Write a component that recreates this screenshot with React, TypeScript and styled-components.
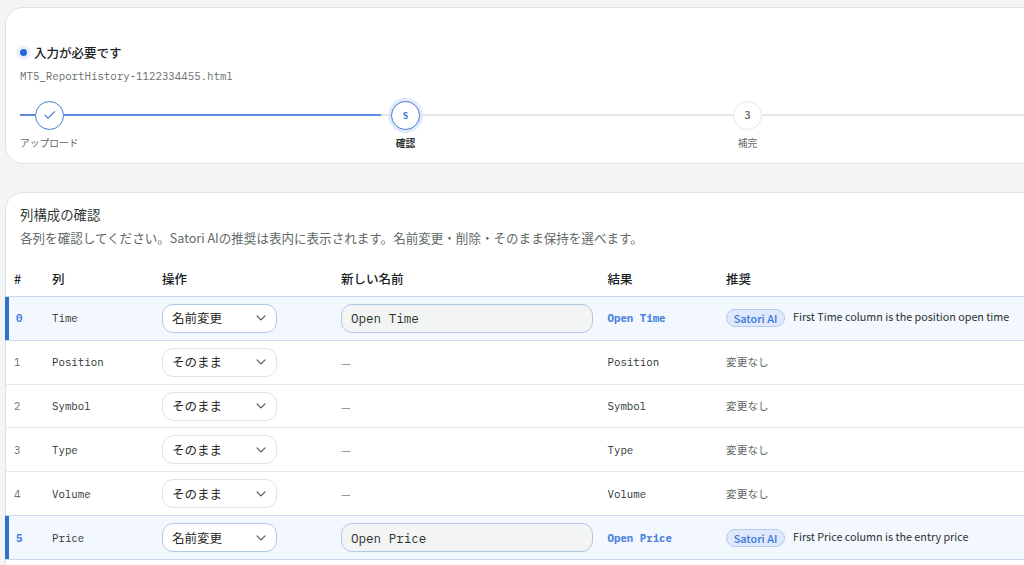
import React from "react";
import styled, { createGlobalStyle, css } from "styled-components";

const sans = `"Noto Sans CJK JP", "Noto Sans", sans-serif`;
const mono = `"IBM Plex Mono", "Liberation Mono", "Noto Sans CJK JP", monospace`;

const Global = createGlobalStyle`
  * { box-sizing: border-box; }
  html, body { margin: 0; height: 100%; overflow: hidden; }
  body { background: #f3f5f4; color: #1f2725; font-family: ${sans}; }
`;

const Page = styled.main`
  height: 565px;
  padding: 7px 0 0 5px;
  display: flex;
  flex-direction: column;
  gap: 28px;
  overflow: hidden;
`;

const Card = styled.section<{ $h: number }>`
  flex: none;
  width: 1090px;
  height: ${(p) => p.$h}px;
  background: #fff;
  border: 1px solid #dfe2e1;
  border-radius: 18px;
`;

const StatusLine = styled.div`
  display: flex;
  align-items: center;
  gap: 7px;
  margin: 35px 0 0 14px;
  height: 20px;
`;

const Dot = styled.span`
  width: 7px;
  height: 7px;
  margin-top: -1px;
  border-radius: 50%;
  background: #2268d8;
  box-shadow: 0 0 0 3.5px #e9f0fc;
`;

const StatusTitle = styled.h1`
  margin: 0;
  font-size: 12.5px;
  line-height: 20px;
  font-weight: 500;
  color: #17201d;
`;

const FileName = styled.div`
  margin: 5px 0 0 14px;
  font: 10.75px/16px ${mono};
  color: #69716e;
`;

const Stepper = styled.ol`
  list-style: none;
  margin: 16px 0 0 14px;
  padding: 0;
  display: flex;
`;

const Step = styled.li<{ $w: number }>`
  flex: none;
  width: ${(p) => p.$w}px;
`;

const Track = styled.div`
  display: flex;
  align-items: center;
  height: 30px;
`;

const Line = styled.span<{ $on?: boolean; $w?: number }>`
  flex: ${(p) => (p.$w ? "none" : 1)};
  width: ${(p) => p.$w ?? 0}px;
  height: 2px;
  background: ${(p) => (p.$on ? "#5a8bdf" : "#e6e8e7")};
`;

const Circle = styled.span<{ $state: "done" | "current" | "todo" }>`
  flex: none;
  display: flex;
  align-items: center;
  justify-content: center;
  width: 29px;
  height: 29px;
  border-radius: 50%;
  background: #fff;
  border: 1px solid ${(p) => (p.$state === "todo" ? "#e3e6e5" : "#4679d2")};
  color: ${(p) => (p.$state === "todo" ? "#5f6865" : "#3a70cf")};
  font-size: 10.7px;
  line-height: 16px;
  font-weight: 500;
  ${(p) =>
    p.$state === "current" &&
    css`
      font-size: 8.5px;
      font-weight: 700;
      box-shadow: 0 0 0 3px #e1eafb;
    `}
`;

const StepLabel = styled.div<{ $w: number; $active?: boolean }>`
  width: ${(p) => p.$w}px;
  margin-top: 6px;
  text-align: center;
  white-space: nowrap;
  font-size: 9.75px;
  line-height: 14px;
  font-weight: ${(p) => (p.$active ? 700 : 400)};
  color: ${(p) => (p.$active ? "#2a322f" : "#5f6865")};
`;

const Title = styled.h2`
  margin: 10px 0 0 14px;
  font-size: 13.4px;
  line-height: 22px;
  font-weight: 400;
  color: #333b38;
`;

const Description = styled.p`
  margin: 2px 0 0 14px;
  font-size: 12.56px;
  line-height: 21px;
  color: #606966;
`;

const Row = styled.div<{ $active?: boolean; $head?: boolean }>`
  display: grid;
  grid-template-columns: 38px 110px 179px 266.5px 118.5px 1fr;
  align-items: center;
  height: ${(p) => (p.$head ? 49 : 43.84)}px;
  margin-left: -1px;
  padding-left: 9px;
  border-bottom: 1px solid #e6e8e7;
  ${(p) =>
    p.$head &&
    css`
      padding-top: 13px;
      font-size: 12.5px;
      line-height: 20px;
      font-weight: 500;
      color: #17201d;
      border-color: #c9d7ea;
    `}
  ${(p) =>
    p.$active &&
    css`
      background: #f3f7fe;
      border-color: #c9d7ea;
      box-shadow: inset 4px 0 #2f6fce, 0 -1px #c9d7ea;
    `}
`;

const Index = styled.span<{ $active?: boolean }>`
  font: ${(p) => (p.$active ? 700 : 400)} 10.7px/16px ${mono};
  padding-left: ${(p) => (p.$active ? 2 : 0)}px;
  color: ${(p) => (p.$active ? "#4a82e0" : "#69716e")};
`;

const Code = styled.span<{ $active?: boolean }>`
  font: ${(p) => (p.$active ? 700 : 400)} 10.75px/16px ${mono};
  color: ${(p) => (p.$active ? "#4a82e0" : "#2f3735")};
`;

const Select = styled.button<{ $active?: boolean }>`
  display: flex;
  align-items: center;
  justify-content: space-between;
  width: 115px;
  height: 29px;
  padding: 0 10px 0 9px;
  background: #fff;
  border: 1px solid ${(p) => (p.$active ? "#b3c8e8" : "#e1e4e3")};
  border-radius: 11px;
  font: 12.5px/20px ${sans};
  color: #1f2725;
`;

const NameInput = styled.input`
  width: 252px;
  height: 29px;
  padding: 0 9px;
  border: 1px solid #b3c8e8;
  border-radius: 11px;
  background: #f3f5f4;
  font: 12.55px/20px ${mono};
  color: #2a322f;
  outline: none;
`;

const Dash = styled.span`
  font-size: 10.7px;
  line-height: 16px;
  padding-top: 3px;
  color: #7b8380;
`;

const Suggestion = styled.div`
  display: flex;
  align-items: center;
  gap: 8px;
  white-space: nowrap;
`;

const Badge = styled.span`
  display: flex;
  align-items: center;
  justify-content: center;
  width: 59px;
  height: 18px;
  border: 1px solid #b3cbf1;
  border-radius: 9px;
  background: #dfe9fb;
  color: #3b76dc;
  font-size: 10.9px;
  line-height: 16px;
  font-weight: 500;
`;

const Reason = styled.span`
  font-size: 10.75px;
  line-height: 16px;
  margin-top: -2px;
  color: #2a322f;
`;

const Unchanged = styled.span`
  font-size: 10.7px;
  line-height: 16px;
  color: #606966;
`;

const Chevron = () => (
  <svg width="10" height="6" viewBox="0 0 10 6" fill="none" stroke="#525b58" strokeWidth="1.2">
    <path d="M1 .9 5 4.9 9 .9" strokeLinecap="round" strokeLinejoin="round" />
  </svg>
);

const Check = () => (
  <svg width="12" height="10" viewBox="0 0 12 10" fill="none" stroke="#3a70cf" strokeWidth="1.1">
    <path d="M1 5.2 4 8.2 10.6 1.6" strokeLinecap="round" strokeLinejoin="round" />
  </svg>
);

type Column = { name: string; rename?: string; reason?: string };

const columns: Column[] = [
  { name: "Time", rename: "Open Time", reason: "First Time column is the position open time" },
  { name: "Position" },
  { name: "Symbol" },
  { name: "Type" },
  { name: "Volume" },
  { name: "Price", rename: "Open Price", reason: "First Price column is the entry price" },
];

const ColumnRow = ({ column, index }: { column: Column; index: number }) => {
  const active = Boolean(column.rename);
  return (
    <Row $active={active}>
      <Index $active={active}>{index}</Index>
      <Code>{column.name}</Code>
      <Select $active={active}>
        {active ? "名前変更" : "そのまま"}
        <Chevron />
      </Select>
      {active ? <NameInput defaultValue={column.rename} /> : <Dash>—</Dash>}
      <Code $active={active}>{column.rename ?? column.name}</Code>
      {active ? (
        <Suggestion>
          <Badge>Satori AI</Badge>
          <Reason>{column.reason}</Reason>
        </Suggestion>
      ) : (
        <Unchanged>変更なし</Unchanged>
      )}
    </Row>
  );
};

export default function App() {
  return (
    <>
      <Global />
      <Page>
        <Card $h={157}>
          <StatusLine>
            <Dot />
            <StatusTitle>入力が必要です</StatusTitle>
          </StatusLine>
          <FileName>MT5_ReportHistory-1122334455.html</FileName>
          <Stepper>
            <Step $w={361}>
              <Track>
                <Line $on $w={15} />
                <Circle $state="done">
                  <Check />
                </Circle>
                <Line $on />
              </Track>
              <StepLabel $w={58}>アップロード</StepLabel>
            </Step>
            <Step $w={342}>
              <Track>
                <Line $w={10} />
                <Circle $state="current">S</Circle>
                <Line />
              </Track>
              <StepLabel $w={49} $active>確認</StepLabel>
            </Step>
            <Step $w={380}>
              <Track>
                <Line $w={10} />
                <Circle $state="todo">3</Circle>
                <Line />
              </Track>
              <StepLabel $w={49}>補完</StepLabel>
            </Step>
          </Stepper>
        </Card>
        <Card $h={420}>
          <Title>列構成の確認</Title>
          <Description>
            各列を確認してください。Satori AIの推奨は表内に表示されます。名前変更・削除・そのまま保持を選べます。
          </Description>
          <Row $head>
            <span>#</span>
            <span>列</span>
            <span>操作</span>
            <span>新しい名前</span>
            <span>結果</span>
            <span>推奨</span>
          </Row>
          {columns.map((column, index) => (
            <ColumnRow key={column.name} column={column} index={index} />
          ))}
        </Card>
      </Page>
    </>
  );
}
